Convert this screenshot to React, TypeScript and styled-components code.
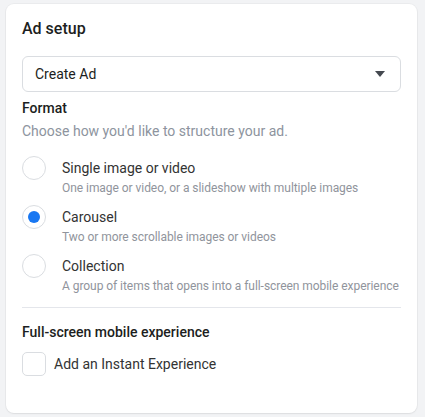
import React, { useState } from "react";
import styled, { createGlobalStyle } from "styled-components";

const GlobalStyle = createGlobalStyle`
  html, body {
    margin: 0;
    background: #f2f3f5;
    font-family: Roboto, "Liberation Sans", Arial, sans-serif;
  }
  body {
    padding: 4px 8px 4px 6px;
  }
`;

const formats = [
  { id: "single", label: "Single image or video", desc: "One image or video, or a slideshow with multiple images" },
  { id: "carousel", label: "Carousel", desc: "Two or more scrollable images or videos" },
  { id: "collection", label: "Collection", desc: "A group of items that opens into a full-screen mobile experience" },
];

const App = () => {
  const [format, setFormat] = useState("carousel");
  const [instant, setInstant] = useState(false);

  return (
    <>
      <GlobalStyle />
      <Card>
        <Title>Ad setup</Title>
        <Select>
          <span>Create Ad</span>
          <Caret />
        </Select>
        <SectionTitle $top={6}>Format</SectionTitle>
        <Hint>Choose how you'd like to structure your ad.</Hint>
        <RadioList>
          {formats.map((f) => (
            <RadioRow key={f.id} onClick={() => setFormat(f.id)}>
              <Radio $checked={format === f.id} />
              <RadioText>
                <RadioLabel>{f.label}</RadioLabel>
                <RadioDesc>{f.desc}</RadioDesc>
              </RadioText>
            </RadioRow>
          ))}
        </RadioList>
        <Divider />
        <SectionTitle $top={14}>Full-screen mobile experience</SectionTitle>
        <CheckRow onClick={() => setInstant(!instant)}>
          <Checkbox $checked={instant} />
          <CheckLabel>Add an Instant Experience</CheckLabel>
        </CheckRow>
      </Card>
    </>
  );
};
export default App;

// styled-components -----------------
const Card = styled.div`
  box-sizing: border-box;
  width: 411px;
  height: 409px;
  background: #fff;
  border-radius: 8px;
  box-shadow: 0 0 0 1px rgba(0, 0, 0, 0.03), 0 1px 2px rgba(0, 0, 0, 0.06);
  padding: 15px 16px 0 16px;
  display: flex;
  flex-direction: column;
  color: #1c1e21;
`;

const Title = styled.div`
  font-size: 16px;
  font-weight: 500;
  line-height: 20px;
  color: #1c1e21;
`;

const Select = styled.div`
  box-sizing: border-box;
  margin-top: 17px;
  height: 36px;
  border: 1px solid #dadde1;
  border-radius: 6px;
  padding: 0 15px 0 12px;
  display: flex;
  align-items: center;
  justify-content: space-between;
  font-size: 14px;
  color: #1c1e21;
`;

const Caret = styled.span`
  width: 0;
  height: 0;
  border-left: 5px solid transparent;
  border-right: 5px solid transparent;
  border-top: 6px solid #444950;
`;

const SectionTitle = styled.div<{ $top: number }>`
  margin-top: ${(p) => p.$top}px;
  font-size: 14px;
  font-weight: 500;
  line-height: 20px;
  color: #1c1e21;
`;

const Hint = styled.div`
  margin-top: 3px;
  font-size: 14px;
  line-height: 20px;
  color: #8d949e;
`;

const RadioList = styled.div`
  margin-top: 15px;
  display: flex;
  flex-direction: column;
  gap: 9px;
`;

const RadioRow = styled.div`
  display: flex;
  align-items: flex-start;
  gap: 16px;
  cursor: pointer;
`;

const Radio = styled.span<{ $checked: boolean }>`
  box-sizing: border-box;
  flex: none;
  width: 24px;
  height: 24px;
  border-radius: 50%;
  border: 1px solid #dadde1;
  display: flex;
  align-items: center;
  justify-content: center;
  &::after {
    content: "";
    width: 12px;
    height: 12px;
    border-radius: 50%;
    background: ${(p) => (p.$checked ? "#1877f2" : "transparent")};
  }
`;

const RadioText = styled.div`
  display: flex;
  flex-direction: column;
  min-width: 0;
`;

const RadioLabel = styled.div`
  font-size: 14px;
  line-height: 24px;
  color: #333;
`;

const RadioDesc = styled.div`
  font-size: 12px;
  line-height: 16px;
  letter-spacing: -0.05px;
  white-space: nowrap;
  color: #90949c;
`;

const Divider = styled.div`
  margin-top: 13px;
  height: 1px;
  background: #e4e6eb;
`;

const CheckRow = styled.div`
  margin-top: 10px;
  display: flex;
  align-items: center;
  gap: 8px;
  cursor: pointer;
`;

const Checkbox = styled.span<{ $checked: boolean }>`
  box-sizing: border-box;
  width: 24px;
  height: 24px;
  border-radius: 5px;
  border: 1px solid #dadde1;
  background: ${(p) => (p.$checked ? "#1877f2" : "#fff")};
`;

const CheckLabel = styled.span`
  font-size: 14px;
  line-height: 20px;
  color: #333;
`;
